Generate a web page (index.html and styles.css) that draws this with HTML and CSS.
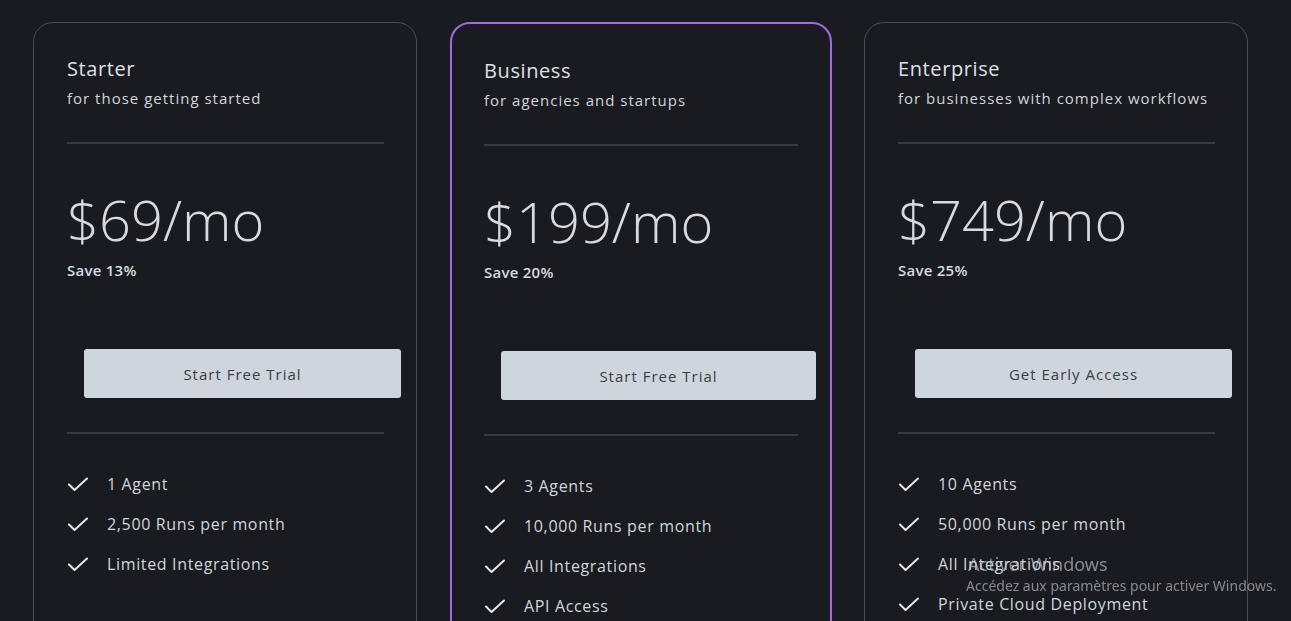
FILE: index.html
```html
<!DOCTYPE html>
<html lang="en">
<head>
<meta charset="utf-8">
<title>Pricing</title>
<link rel="stylesheet" href="styles.css">
</head>
<body>
<main class="plans">
  <section class="card">
    <h2 class="plan-name">Starter</h2>
    <p class="plan-desc">for those getting started</p>
    <hr class="divider">
    <div class="price">$69/mo</div>
    <div class="save">Save 13%</div>
    <button class="cta">Start Free Trial</button>
    <hr class="divider divider-lower">
    <ul class="features">
      <li><svg class="check" viewBox="0 0 20 15"><path d="M1 7.5 L6.5 13 L19 1.5"/></svg><span>1 Agent</span></li>
      <li><svg class="check" viewBox="0 0 20 15"><path d="M1 7.5 L6.5 13 L19 1.5"/></svg><span>2,500 Runs per month</span></li>
      <li><svg class="check" viewBox="0 0 20 15"><path d="M1 7.5 L6.5 13 L19 1.5"/></svg><span>Limited Integrations</span></li>
    </ul>
  </section>
  <section class="card featured">
    <h2 class="plan-name">Business</h2>
    <p class="plan-desc">for agencies and startups</p>
    <hr class="divider">
    <div class="price">$199/mo</div>
    <div class="save">Save 20%</div>
    <button class="cta">Start Free Trial</button>
    <hr class="divider divider-lower">
    <ul class="features">
      <li><svg class="check" viewBox="0 0 20 15"><path d="M1 7.5 L6.5 13 L19 1.5"/></svg><span>3 Agents</span></li>
      <li><svg class="check" viewBox="0 0 20 15"><path d="M1 7.5 L6.5 13 L19 1.5"/></svg><span>10,000 Runs per month</span></li>
      <li><svg class="check" viewBox="0 0 20 15"><path d="M1 7.5 L6.5 13 L19 1.5"/></svg><span>All Integrations</span></li>
      <li><svg class="check" viewBox="0 0 20 15"><path d="M1 7.5 L6.5 13 L19 1.5"/></svg><span>API Access</span></li>
    </ul>
  </section>
  <section class="card last">
    <h2 class="plan-name">Enterprise</h2>
    <p class="plan-desc">for businesses with complex workflows</p>
    <hr class="divider">
    <div class="price">$749/mo</div>
    <div class="save">Save 25%</div>
    <button class="cta">Get Early Access</button>
    <hr class="divider divider-lower">
    <ul class="features">
      <li><svg class="check" viewBox="0 0 20 15"><path d="M1 7.5 L6.5 13 L19 1.5"/></svg><span>10 Agents</span></li>
      <li><svg class="check" viewBox="0 0 20 15"><path d="M1 7.5 L6.5 13 L19 1.5"/></svg><span>50,000 Runs per month</span></li>
      <li><svg class="check" viewBox="0 0 20 15"><path d="M1 7.5 L6.5 13 L19 1.5"/></svg><span>All Integrations</span></li>
      <li><svg class="check" viewBox="0 0 20 15"><path d="M1 7.5 L6.5 13 L19 1.5"/></svg><span>Private Cloud Deployment</span></li>
    </ul>
  </section>
</main>
<div class="watermark">
  <div class="wm-title">Activer Windows</div>
  <div class="wm-sub">Accédez aux paramètres pour activer Windows.</div>
</div>
</body>
</html>
```

FILE: styles.css
```css
* { box-sizing: border-box; }

html, body {
  margin: 0;
  padding: 0;
  height: 100%;
  overflow: hidden;
}

body {
  background: #191b20;
  color: #d1d5db;
  font-family: "Open Sans", "Liberation Sans", sans-serif;
}

.plans {
  display: flex;
  gap: 33px;
  padding: 22px 40px 0 33px;
  align-items: flex-start;
}

.card {
  width: 384px;
  flex: none;
  min-height: 720px;
  border: 1px solid #4a4f5c;
  border-radius: 20px;
  padding: 34px 32px 0 33px;
  display: flex;
  flex-direction: column;
  align-items: stretch;
}

.card.featured {
  width: 382px;
  border: 2px solid #9b6de3;
  padding: 35px 32px 0 32px;
}

.card.last {
  margin-left: -1px;
}

.plan-name {
  margin: 0;
  font-size: 20px;
  line-height: 24px;
  font-weight: 400;
  letter-spacing: 0.6px;
  color: #dde1e7;
}

.plan-desc {
  margin: 6px 0 0;
  font-size: 15px;
  line-height: 22px;
  letter-spacing: 1px;
  color: #d1d5db;
}

.divider {
  margin: 33px 0 0;
  border: 0;
  height: 2px;
  background: #363a43;
}

.price {
  margin-top: 39px;
  font-size: 56px;
  line-height: 72px;
  font-weight: 300;
  color: #d6dae1;
}

.save {
  margin-top: 5px;
  font-size: 15px;
  line-height: 20px;
  font-weight: 600;
  letter-spacing: 0.25px;
  color: #d6dae1;
}

.cta {
  margin: 69px 0 0 17px;
  width: 317px;
  height: 49px;
  border: 0;
  border-radius: 3px;
  background: #cfd5dd;
  color: #3a3d42;
  font-family: inherit;
  font-size: 15px;
  letter-spacing: 1px;
  cursor: pointer;
}

.featured .cta {
  width: 315px;
}

.divider-lower {
  margin-top: 34px;
}

.features {
  list-style: none;
  margin: 38px 0 0;
  padding: 0;
  display: flex;
  flex-direction: column;
  gap: 16px;
}

.features li {
  display: flex;
  align-items: center;
  gap: 19px;
  font-size: 16px;
  line-height: 24px;
  letter-spacing: 0.65px;
  color: #d1d5db;
}

.check {
  width: 20px;
  height: 15px;
  margin-left: 1px;
  flex: none;
  fill: none;
  stroke: #e5e7eb;
  stroke-width: 2;
  stroke-linecap: round;
  stroke-linejoin: round;
}

.watermark {
  position: fixed;
  left: 966px;
  top: 552px;
  color: rgba(200, 203, 208, 0.62);
  font-family: "Noto Sans", "DejaVu Sans", sans-serif;
  pointer-events: none;
}

.wm-title {
  font-size: 18px;
  line-height: 24px;
  padding-left: 2px;
}

.wm-sub {
  font-size: 14px;
  line-height: 20px;
}
```
